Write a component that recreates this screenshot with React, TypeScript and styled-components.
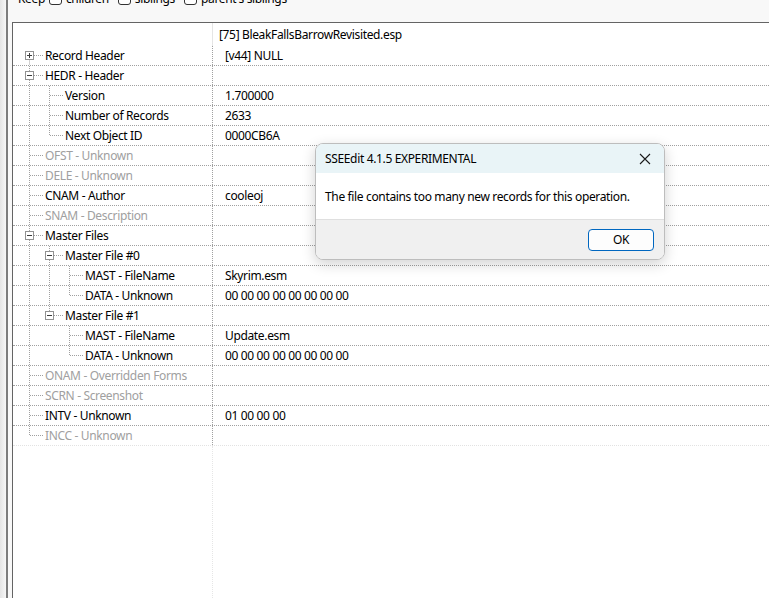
import * as React from 'react';
import styled, { createGlobalStyle } from 'styled-components';

const GlobalStyle = createGlobalStyle`
  html, body {
    margin: 0;
    padding: 0;
    background: #f0f0f0;
  }
  body {
    font-family: "Noto Sans", "Liberation Sans", sans-serif;
    font-size: 12px;
    letter-spacing: -0.35px;
    color: #000;
  }
`;

const Window = styled.div`
  position: relative;
  display: flex;
  width: 769px;
  height: 598px;
  overflow: hidden;
  background: #f0f0f0;
`;

const Splitter = styled.div`
  width: 6px;
  flex: none;
  background: linear-gradient(to right, #e4e4e4, #f6f6f6);
  border-right: 2px solid #7c7c7c;
`;

const Main = styled.div`
  flex: 1;
  display: flex;
  flex-direction: column;
  min-width: 0;
  background: #f8f8f8;
`;

const Toolbar = styled.div`
  height: 22px;
  flex: none;
  overflow: hidden;
  padding-left: 10px;
`;

const ToolbarRow = styled.div`
  display: flex;
  align-items: center;
  margin-top: -10px;
  height: 16px;
`;

const ToolLabel = styled.span<{ $after?: number }>`
  margin-left: 4px;
  margin-right: ${p => p.$after ?? 0}px;
  &:first-child {
    margin-left: 0;
  }
`;

const Check = styled.span`
  width: 11px;
  height: 11px;
  border: 1px solid #333;
  border-radius: 3px;
  background: #fff;
`;

const Panel = styled.div`
  flex: 1;
  margin-left: 4px;
  border-left: 1px solid #646464;
  border-top: 1px solid #646464;
  background: #fff;
  display: flex;
  flex-direction: column;
`;

const HeaderRow = styled.div`
  display: grid;
  grid-template-columns: 200px 1fr;
  height: 23px;
  flex: none;
`;

const HeaderCell = styled.div<{ $divider?: boolean }>`
  display: flex;
  align-items: center;
  padding-left: 6px;
  border-right: ${p => (p.$divider ? '1px solid #e5e5e5' : 'none')};
`;

const Row = styled.div<{ $last?: boolean }>`
  display: grid;
  grid-template-columns: 200px 1fr;
  height: 19px;
  border-bottom: 1px dotted ${p => (p.$last ? '#e2e2e2' : '#a0a0a0')};
`;

const NameCell = styled.div<{ $disabled?: boolean }>`
  display: flex;
  align-items: center;
  padding-left: 6px;
  border-right: 1px dotted #a0a0a0;
  color: ${p => (p.$disabled ? '#a0a0a0' : '#000')};
  white-space: nowrap;
  overflow: hidden;
`;

const ValueCell = styled.div`
  display: flex;
  align-items: center;
  padding-left: 12px;
  white-space: nowrap;
`;

const Filler = styled.div`
  flex: 1;
  display: grid;
  grid-template-columns: 200px 1fr;
`;

const FillerColumn = styled.div`
  border-right: 1px dotted #e6e6e6;
`;

const Dialog = styled.div`
  position: absolute;
  left: 315px;
  top: 143px;
  width: 350px;
  height: 117px;
  box-sizing: border-box;
  border: 1px solid #bdbdbd;
  border-radius: 8px;
  overflow: hidden;
  display: flex;
  flex-direction: column;
  background: #fff;
  box-shadow: 0 4px 14px rgba(0, 0, 0, 0.18);
`;

const TitleBar = styled.div`
  height: 29px;
  flex: none;
  display: flex;
  align-items: center;
  justify-content: space-between;
  padding: 0 9px;
  background: #e9f4f7;
`;

const CloseButton = styled.button`
  border: none;
  background: transparent;
  padding: 0;
  width: 12px;
  height: 12px;
  display: flex;
  margin-right: 4px;
`;

const Message = styled.div`
  height: 46px;
  flex: none;
  display: flex;
  align-items: center;
  padding-left: 9px;
  background: #fff;
`;

const Footer = styled.div`
  flex: 1;
  display: flex;
  align-items: center;
  justify-content: flex-end;
  padding-right: 10px;
  background: #f0f0f0;
  border-top: 1px solid #dfdfdf;
`;

const OkButton = styled.button`
  width: 66px;
  height: 22px;
  border: 1px solid #0067c0;
  border-radius: 4px;
  background: #fdfdfd;
  font-family: inherit;
  font-size: 12px;
  letter-spacing: inherit;
  color: #000;
  padding: 0;
`;

type TreeNode = {
  label: string;
  value?: string;
  disabled?: boolean;
  collapsed?: boolean;
  children?: TreeNode[];
};

const zeros = '00 00 00 00 00 00 00 00';

const tree: TreeNode[] = [
  { label: 'Record Header', value: '[v44] NULL', collapsed: true, children: [] },
  {
    label: 'HEDR - Header',
    children: [
      { label: 'Version', value: '1.700000' },
      { label: 'Number of Records', value: '2633' },
      { label: 'Next Object ID', value: '0000CB6A' },
    ],
  },
  { label: 'OFST - Unknown', disabled: true },
  { label: 'DELE - Unknown', disabled: true },
  { label: 'CNAM - Author', value: 'cooleoj' },
  { label: 'SNAM - Description', disabled: true },
  {
    label: 'Master Files',
    children: [
      {
        label: 'Master File #0',
        children: [
          { label: 'MAST - FileName', value: 'Skyrim.esm' },
          { label: 'DATA - Unknown', value: zeros },
        ],
      },
      {
        label: 'Master File #1',
        children: [
          { label: 'MAST - FileName', value: 'Update.esm' },
          { label: 'DATA - Unknown', value: zeros },
        ],
      },
    ],
  },
  { label: 'ONAM - Overridden Forms', disabled: true },
  { label: 'SCRN - Screenshot', disabled: true },
  { label: 'INTV - Unknown', value: '01 00 00 00' },
  { label: 'INCC - Unknown', disabled: true },
];

type FlatRow = {
  node: TreeNode;
  guides: boolean[];
  isLast: boolean;
  isFirstRoot: boolean;
};

function flatten(nodes: TreeNode[], guides: boolean[], out: FlatRow[]) {
  nodes.forEach((node, i) => {
    const isLast = i === nodes.length - 1;
    out.push({ node, guides, isLast, isFirstRoot: guides.length === 0 && i === 0 });
    if (node.children && !node.collapsed) flatten(node.children, [...guides, !isLast], out);
  });
  return out;
}

const LINE = '#a0a0a0';

const Guide: React.FC<{ on: boolean }> = ({ on }) => (
  <svg width="20" height="19" style={{ flex: 'none' }}>
    {on && <line x1="10.5" y1="0" x2="10.5" y2="19" stroke={LINE} strokeDasharray="1 1" />}
  </svg>
);

const Connector: React.FC<{ row: FlatRow }> = ({ row }) => {
  const { node, isLast, isFirstRoot } = row;
  const hasBox = !!node.children;
  const y1 = isFirstRoot ? 9.5 : 0;
  const y2 = isLast ? 9.5 : 19;
  return (
    <svg width="26" height="19" style={{ flex: 'none' }}>
      <line x1="10.5" y1={y1} x2="10.5" y2={y2} stroke={LINE} strokeDasharray="1 1" />
      <line x1={hasBox ? 15 : 11} y1="9.5" x2="24" y2="9.5" stroke={LINE} strokeDasharray="1 1" />
      {hasBox && (
        <g>
          <rect x="6.5" y="5.5" width="8" height="8" fill="#fff" stroke="#919191" />
          <line x1="8" y1="9.5" x2="13" y2="9.5" stroke="#3c3c3c" />
          {node.collapsed && <line x1="10.5" y1="7" x2="10.5" y2="12" stroke="#3c3c3c" />}
        </g>
      )}
    </svg>
  );
};

const App: React.FC = () => {
  const rows = flatten(tree, [], []);
  return (
    <Window>
      <GlobalStyle />
      <Splitter />
      <Main>
        <Toolbar>
          <ToolbarRow>
            <ToolLabel $after={4}>Keep</ToolLabel>
            <Check />
            <ToolLabel $after={9}>children</ToolLabel>
            <Check />
            <ToolLabel $after={9}>siblings</ToolLabel>
            <Check />
            <ToolLabel>parent's siblings</ToolLabel>
          </ToolbarRow>
        </Toolbar>
        <Panel>
          <HeaderRow>
            <HeaderCell $divider />
            <HeaderCell>[75] BleakFallsBarrowRevisited.esp</HeaderCell>
          </HeaderRow>
          {rows.map((row, i) => (
            <Row key={i} $last={i === rows.length - 1}>
              <NameCell $disabled={row.node.disabled}>
                {row.guides.map((g, j) => (
                  <Guide key={j} on={g} />
                ))}
                <Connector row={row} />
                {row.node.label}
              </NameCell>
              <ValueCell>{row.node.value}</ValueCell>
            </Row>
          ))}
          <Filler>
            <FillerColumn />
            <div />
          </Filler>
        </Panel>
      </Main>
      <Dialog>
        <TitleBar>
          <span>SSEEdit 4.1.5 EXPERIMENTAL</span>
          <CloseButton aria-label="Close">
            <svg width="12" height="12" viewBox="0 0 12 12">
              <path d="M1 1 L11 11 M11 1 L1 11" stroke="#1b1b1b" strokeWidth="1.1" />
            </svg>
          </CloseButton>
        </TitleBar>
        <Message>The file contains too many new records for this operation.</Message>
        <Footer>
          <OkButton>OK</OkButton>
        </Footer>
      </Dialog>
    </Window>
  );
};

export default App;
